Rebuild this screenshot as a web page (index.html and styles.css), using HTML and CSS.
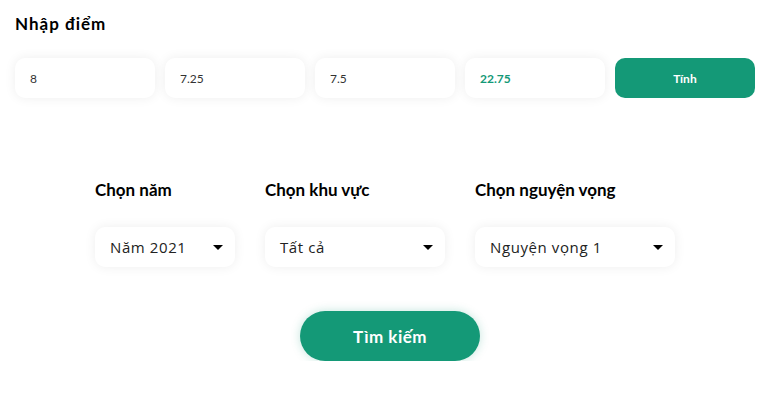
FILE: index.html
```html
<!DOCTYPE html>
<html lang="vi">
<head>
<meta charset="utf-8">
<link rel="stylesheet" href="styles.css">
</head>
<body>
<section class="score">
  <h2 class="title">Nhập điểm</h2>
  <div class="row">
    <div class="box">8</div>
    <div class="box">7.25</div>
    <div class="box">7.5</div>
    <div class="box total">22.75</div>
    <button class="btn-calc">Tính</button>
  </div>
</section>
<section class="search">
  <div class="filters">
    <div class="field">
      <div class="label">Chọn năm</div>
      <div class="select w140"><span>Năm 2021</span><span class="caret"></span></div>
    </div>
    <div class="field">
      <div class="label">Chọn khu vực</div>
      <div class="select w180"><span>Tất cả</span><span class="caret"></span></div>
    </div>
    <div class="field">
      <div class="label">Chọn nguyện vọng</div>
      <div class="select w200"><span>Nguyện vọng 1</span><span class="caret"></span></div>
    </div>
  </div>
  <div class="actions"><button class="btn-search">Tìm kiếm</button></div>
</section>
</body>
</html>
```
FILE: styles.css
```css
* { box-sizing: border-box; }
body {
  margin: 0;
  padding: 12px 16px 0 15px;
  background: #fff;
  font-family: Lato, "Open Sans", sans-serif;
  color: #111;
}
.title {
  margin: 0;
  font-size: 17px;
  font-weight: 700;
  line-height: 24px;
  letter-spacing: 1px;
  color: #000;
}
.row {
  display: flex;
  gap: 10px;
  margin-top: 22px;
}
.box, .btn-calc {
  width: 140px;
  height: 40px;
  border-radius: 10px;
}
.box {
  background: #fff;
  box-shadow: 0 0 12px rgba(0,0,0,0.07);
  display: flex;
  align-items: center;
  padding-left: 15px;
  font-size: 12px;
  color: #333;
}
.box.total { color: #149977; font-weight: 700; }
.btn-calc {
  border: 0;
  background: #149977;
  color: #fff;
  font-family: inherit;
  font-weight: 700;
  font-size: 12px;
}
.search { margin-top: 80px; }
.filters {
  display: flex;
  justify-content: center;
  gap: 30px;
}
.label {
  font-size: 17px;
  font-weight: 700;
  line-height: 24px;
  color: #000;
}
.select {
  margin-top: 25px;
  height: 40px;
  border-radius: 10px;
  background: #fff;
  box-shadow: 0 0 12px rgba(0,0,0,0.07);
  display: flex;
  align-items: center;
  justify-content: space-between;
  padding: 0 12px 0 15px;
  font-family: "Open Sans", Lato, sans-serif;
  font-size: 15px;
  letter-spacing: 0.6px;
  color: #222;
}
.w140 { width: 140px; }
.w180 { width: 180px; }
.w200 { width: 200px; }
.caret {
  width: 0; height: 0;
  border-left: 5px solid transparent;
  border-right: 5px solid transparent;
  border-top: 5px solid #000;
}
.actions {
  display: flex;
  justify-content: center;
  margin-top: 44px;
  padding-left: 10px;
}
.btn-search {
  width: 180px;
  height: 50px;
  border: 0;
  border-radius: 25px;
  background: #149977;
  color: #fff;
  font-family: inherit;
  font-weight: 700;
  font-size: 17px;
  letter-spacing: 0.5px;
  box-shadow: 0 0 10px rgba(20,153,119,0.25);
}
```
